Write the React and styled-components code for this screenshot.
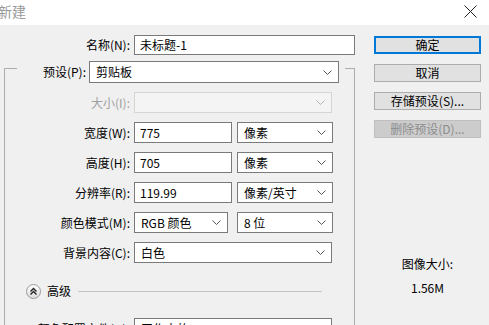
import React from 'react'
import styled, { createGlobalStyle } from 'styled-components'

const GlobalStyle = createGlobalStyle`
  html, body {
    margin: 0;
    padding: 0;
    background: #f0f0f0;
    overflow: hidden;
  }
  body {
    font-family: "Noto Sans CJK SC", "Noto Sans", sans-serif;
    font-size: 12px;
    color: #000;
  }
`;

const Window = styled.div`
  width: 489px;
  height: 325px;
  overflow: hidden;
  background: #f0f0f0;
`;

const TitleBar = styled.div`
  height: 25px;
  background: #fff;
  display: flex;
  align-items: center;
  justify-content: space-between;
  padding-right: 12px;
`;

const TitleText = styled.span`
  margin-left: -2px;
  font-size: 14px;
  line-height: 16px;
  color: #999;
  margin-top: -4px;
`;

const CloseIcon = styled.svg`
  width: 13px;
  height: 13px;
  margin-top: -3px;
`;

const Body = styled.div`
  display: flex;
  padding-top: 10px;
`;

const Left = styled.div`
  width: 355px;
  flex-shrink: 0;
`;

const Row = styled.div`
  display: flex;
  align-items: center;
  height: ${(p) => p.h || 21}px;
`;

const Label = styled.span`
  width: ${(p) => p.w || 125}px;
  flex-shrink: 0;
  text-align: right;
  white-space: nowrap;
  line-height: 16px;
  color: ${(p) => (p.disabled ? '#a0a0a0' : '#000')};
`;

const Input = styled.div`
  box-sizing: border-box;
  width: ${(p) => p.w}px;
  height: 100%;
  margin-left: ${(p) => p.gap || 4}px;
  background: #fff;
  border: 1px solid #7a7a7a;
  padding-left: 5px;
  display: flex;
  align-items: center;
  line-height: 16px;
  white-space: nowrap;
  overflow: hidden;
`;

const SelectBox = styled.div`
  box-sizing: border-box;
  width: ${(p) => p.w}px;
  height: 100%;
  margin-left: ${(p) => p.gap || 4}px;
  background: ${(p) => (p.disabled ? '#f4f4f4' : '#fff')};
  border: 1px solid ${(p) => (p.disabled ? '#d6d6d6' : '#7a7a7a')};
  padding: 0 6px;
  display: flex;
  align-items: center;
  justify-content: space-between;
  line-height: 16px;
  white-space: nowrap;
  overflow: hidden;
  flex-shrink: 0;
`;

const Chevron = styled.svg`
  width: 9px;
  height: 5px;
  flex-shrink: 0;
`;

const Group = styled.div`
  margin-top: 13px;
  margin-left: 4px;
  border: 1px solid #adadad;
  border-bottom: none;
  height: 300px;
`;

const Legend = styled.div`
  display: flex;
  align-items: center;
  height: 22px;
  width: 328px;
  margin-top: -8px;
  margin-left: 12px;
  background: #f0f0f0;
`;

const Rows = styled.div`
  display: flex;
  flex-direction: column;
  gap: 9px;
  margin-top: ${(p) => p.top || 9}px;
`;

const Advanced = styled.div`
  display: flex;
  align-items: center;
  height: 16px;
  margin-top: 20px;
  padding-left: 21px;
  margin-right: 32px;
`;

const AdvText = styled.span`
  margin-left: 6px;
  line-height: 16px;
`;

const Rule = styled.div`
  flex: 1;
  height: 1px;
  background: #c4c4c4;
  margin-left: 7px;
`;

const Right = styled.div`
  display: flex;
  flex-direction: column;
  margin-left: 19px;
  padding-top: 1px;
  width: 107px;
`;

const Buttons = styled.div`
  display: flex;
  flex-direction: column;
  gap: 10px;
`;

const Button = styled.div`
  box-sizing: border-box;
  height: 18px;
  width: 107px;
  display: flex;
  align-items: center;
  justify-content: center;
  background: ${(p) => (p.disabled ? '#cccccc' : '#e1e1e1')};
  border: ${(p) => (p.primary ? '2px solid #0078d7' : p.disabled ? '1px solid #bfbfbf' : '1px solid #adadad')};
  color: ${(p) => (p.disabled ? '#8d8d8d' : '#000')};
  line-height: 16px;
`;

const Info = styled.div`
  margin-top: 118px;
  display: flex;
  flex-direction: column;
  align-items: center;
  gap: 8px;
  line-height: 16px;
`;

const Arrow = ({ color = '#555' }) => (
  <Chevron viewBox="0 0 9 5">
    <polyline points="0.5,0.5 4.5,4.5 8.5,0.5" fill="none" stroke={color} strokeWidth="1" />
  </Chevron>
);

const ExpandIcon = () => (
  <svg width="15" height="15" viewBox="0 0 15 15">
    <defs>
      <linearGradient id="adv" x1="0" y1="0" x2="0" y2="1">
        <stop offset="0" stopColor="#ffffff" />
        <stop offset="1" stopColor="#dcdcdc" />
      </linearGradient>
    </defs>
    <circle cx="7.5" cy="7.5" r="7" fill="url(#adv)" stroke="#9a9a9a" strokeWidth="1" />
    <polyline points="4.5,7.5 7.5,4.5 10.5,7.5" fill="none" stroke="#222" strokeWidth="1.4" />
    <polyline points="4.5,10.5 7.5,7.5 10.5,10.5" fill="none" stroke="#222" strokeWidth="1.4" />
  </svg>
);

const Select = ({ w, gap, disabled, children }) => (
  <SelectBox w={w} gap={gap} disabled={disabled}>
    <span>{children}</span>
    <Arrow color={disabled ? '#b5b5b5' : '#555'} />
  </SelectBox>
);

const sizeRows = [
  { label: '宽度(W):', value: '775', unit: '像素' },
  { label: '高度(H):', value: '705', unit: '像素' },
  { label: '分辨率(R):', value: '119.99', unit: '像素/英寸' },
];

export default function App() {
  return (
    <Window>
      <GlobalStyle />
      <TitleBar>
        <TitleText>新建</TitleText>
        <CloseIcon viewBox="0 0 13 13">
          <line x1="0.5" y1="0.5" x2="12.5" y2="12.5" stroke="#222" strokeWidth="1" />
          <line x1="12.5" y1="0.5" x2="0.5" y2="12.5" stroke="#222" strokeWidth="1" />
        </CloseIcon>
      </TitleBar>
      <Body>
        <Left>
          <Row h={20}>
            <Label w={130}>名称(N):</Label>
            <Input w={223}>未标题-1</Input>
          </Row>
          <Group>
            <Legend>
              <Label w={69}>预设(P):</Label>
              <Select w={250} gap={3}>剪贴板</Select>
            </Legend>
            <Rows>
              <Row>
                <Label disabled>大小(I):</Label>
                <Select w={198} disabled />
              </Row>
              {sizeRows.map((r) => (
                <Row key={r.label}>
                  <Label>{r.label}</Label>
                  <Input w={98}>{r.value}</Input>
                  <Select w={96} gap={5}>{r.unit}</Select>
                </Row>
              ))}
              <Row>
                <Label>颜色模式(M):</Label>
                <Select w={94}>RGB 颜色</Select>
                <Select w={96} gap={9}>8 位</Select>
              </Row>
              <Row>
                <Label>背景内容(C):</Label>
                <Select w={198}>白色</Select>
              </Row>
            </Rows>
            <Advanced>
              <ExpandIcon />
              <AdvText>高级</AdvText>
              <Rule />
            </Advanced>
            <Rows top={19}>
              <Row>
                <Label>颜色配置文件(O):</Label>
                <Select w={198}>工作中的 RGB: sRGB IEC619...</Select>
              </Row>
            </Rows>
          </Group>
        </Left>
        <Right>
          <Buttons>
            <Button primary>确定</Button>
            <Button>取消</Button>
            <Button>存储预设(S)...</Button>
            <Button disabled>删除预设(D)...</Button>
          </Buttons>
          <Info>
            <span>图像大小:</span>
            <span>1.56M</span>
          </Info>
        </Right>
      </Body>
    </Window>
  )
}
